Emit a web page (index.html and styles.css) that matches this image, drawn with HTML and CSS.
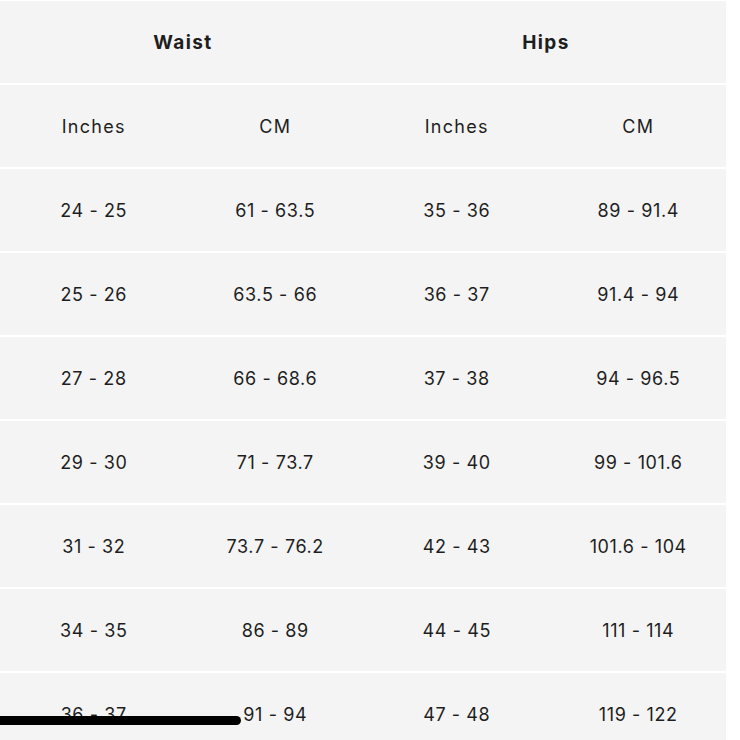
FILE: index.html
```html
<!DOCTYPE html>
<html>
<head>
<meta charset="utf-8">
<link rel="stylesheet" href="styles.css">
</head>
<body>
<div class="page">
  <table class="sizes">
    <tr class="group">
      <th colspan="2">Waist</th>
      <th colspan="2">Hips</th>
    </tr>
    <tr class="units">
      <td>Inches</td><td>CM</td><td>Inches</td><td>CM</td>
    </tr>
    <tr><td>24 - 25</td><td>61 - 63.5</td><td>35 - 36</td><td>89 - 91.4</td></tr>
    <tr><td>25 - 26</td><td>63.5 - 66</td><td>36 - 37</td><td>91.4 - 94</td></tr>
    <tr><td>27 - 28</td><td>66 - 68.6</td><td>37 - 38</td><td>94 - 96.5</td></tr>
    <tr><td>29 - 30</td><td>71 - 73.7</td><td>39 - 40</td><td>99 - 101.6</td></tr>
    <tr><td>31 - 32</td><td>73.7 - 76.2</td><td>42 - 43</td><td>101.6 - 104</td></tr>
    <tr><td>34 - 35</td><td>86 - 89</td><td>44 - 45</td><td>111 - 114</td></tr>
    <tr><td>36 - 37</td><td>91 - 94</td><td>47 - 48</td><td>119 - 122</td></tr>
  </table>
  <div class="mark"></div>
</div>
</body>
</html>
```
FILE: styles.css
```css
html, body {
  margin: 0;
  padding: 0;
  background: #ffffff;
}
.page {
  position: relative;
  width: 740px;
  height: 740px;
  overflow: hidden;
}
.sizes {
  width: 726px;
  border-collapse: collapse;
  table-layout: fixed;
  font-family: "Inter", "Liberation Sans", sans-serif;
  color: #1e1e1e;
}
.sizes tr {
  border-top: 2px solid #ffffff;
}
.sizes tr:first-child {
  border-top: 1px solid #ffffff;
}
.sizes th,
.sizes td {
  background: #f4f4f4;
  height: 82px;
  padding: 0;
  text-align: center;
  vertical-align: middle;
  font-size: 18px;
  font-weight: 400;
  letter-spacing: 0.6px;
}
.sizes td {
  padding-left: 6px;
}
.units td {
  letter-spacing: 1.3px;
}
.sizes th {
  padding-left: 3px;
  font-weight: 700;
  font-size: 19px;
  letter-spacing: 1.4px;
}
.mark {
  position: absolute;
  left: 0;
  top: 716px;
  width: 241px;
  height: 9px;
  background: #000000;
  border-radius: 0 5px 5px 0;
}
```
